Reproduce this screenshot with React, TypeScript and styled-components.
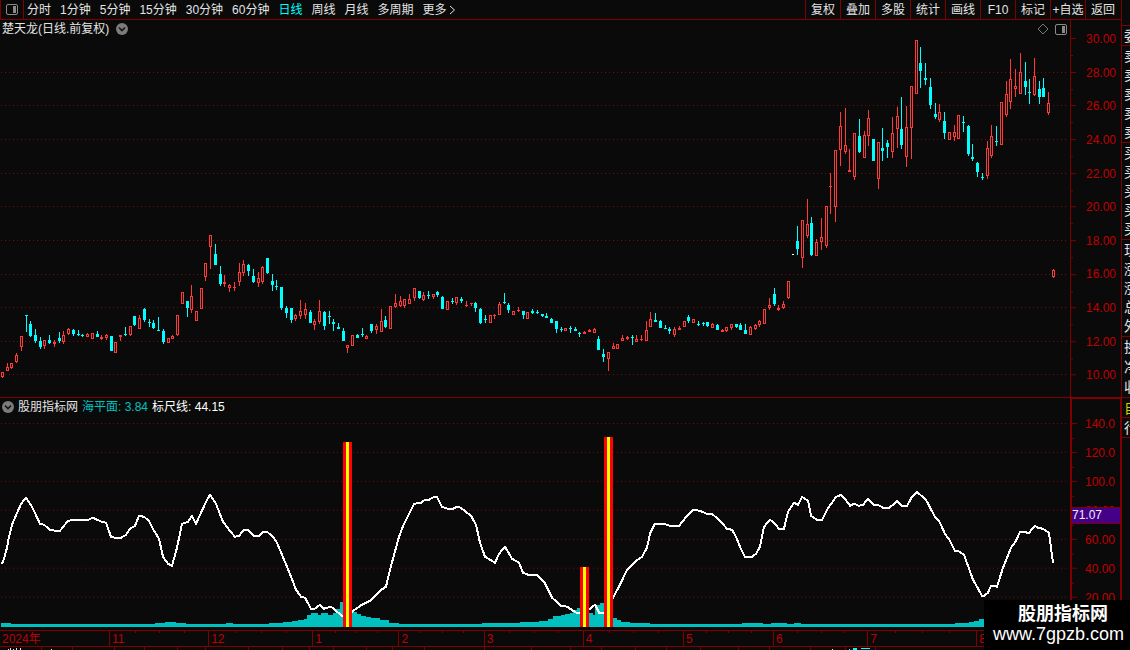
import React from "react";
import styled, { createGlobalStyle, css } from "styled-components";

const color = {
  bg: "#0a0a0a",
  rule: "#800000",
  grid: "#780c0c",
  label: "#c00000",
  text: "#e4e4e4",
  up: "#ff3838",
  down: "#00ffff",
  sea: "#00c0c0",
};

const GlobalStyle = createGlobalStyle`
  * { box-sizing: border-box; }
  body {
    margin: 0;
    background: ${color.bg};
    color: ${color.text};
    font: 12px/16px "Liberation Sans", "Noto Sans CJK SC", sans-serif;
    overflow: hidden;
  }
`;

/* x, high, body top, body bottom, low, direction (r = up, c = down, w = unchanged) */
const CANDLES = `
2 372 372 377 378 r|7 363 367 371 371 r|11 363 363 368 369 r|16 353 355 362 363 r|21 336 336 347 351 r
26 315 315 316 332 c|30 321 324 336 337 c|35 329 335 341 343 c|40 337 341 347 349 c|44 340 340 346 349 r
49 335 340 343 344 c|54 340 342 344 347 r|59 332 338 341 343 c|63 331 335 342 344 r|68 328 329 334 335 r
73 329 330 334 336 c|78 330 334 335 336 c|82 334 335 336 337 c|87 333 334 337 337 r|92 333 333 339 339 r
97 331 334 337 337 c|101 335 337 339 340 r|106 334 335 338 340 r|111 336 336 351 351 c|115 342 342 353 353 r
120 335 335 337 341 r|125 327 334 335 336 c|130 326 326 335 336 r|134 316 316 325 326 c|139 315 318 329 329 r
144 308 309 320 322 c|149 319 322 323 327 c|153 320 323 328 329 c|158 317 330 331 331 c|163 329 331 342 344 c
168 338 338 343 343 r|172 335 336 339 339 r|177 315 315 335 336 r|182 292 292 304 304 r|187 301 301 308 317 c
191 285 296 310 313 r|196 311 311 321 321 r|201 288 288 309 309 r|205 263 263 277 281 r|210 235 235 247 269 r
215 244 254 265 265 c|220 266 274 284 286 c|224 275 282 284 287 r|229 284 285 288 292 r|234 282 287 288 291 r
239 263 272 282 286 r|243 260 264 273 276 r|248 264 265 271 276 c|253 269 276 282 283 c|258 272 278 283 287 r
262 266 267 282 284 r|267 258 258 273 274 c|272 274 281 285 291 c|276 280 286 287 290 c|281 287 287 308 310 c
286 306 308 313 318 c|291 308 308 320 323 c|295 314 315 319 321 r|300 300 311 316 319 r|305 303 309 315 319 r
310 310 312 323 323 c|314 319 321 325 330 r|319 300 311 322 324 r|324 311 312 326 330 c|329 311 316 317 324 c
333 319 322 324 331 c|338 323 327 329 329 c|343 328 331 341 341 c|347 345 345 348 353 r|352 335 335 346 346 r
357 334 335 338 338 c|362 328 334 335 337 c|366 335 336 339 339 r|371 324 324 331 333 c|376 324 326 330 334 r
381 309 321 332 332 r|385 316 320 327 328 c|390 306 306 329 329 r|395 294 303 307 308 r|400 296 301 306 307 r
404 299 299 306 308 r|409 294 299 304 304 r|414 288 288 298 301 r|419 291 291 298 299 c|423 292 295 300 301 r
428 291 295 296 299 c|433 294 294 297 299 r|437 291 292 295 297 c|442 296 297 309 309 c|447 301 301 310 310 r
452 298 301 302 304 c|456 297 297 303 305 r|461 297 299 301 303 c|466 301 305 306 307 r|471 303 303 304 306 r
475 302 303 308 312 c|480 308 309 323 324 c|485 315 319 320 323 c|490 315 315 323 323 r|494 314 315 316 319 r
499 302 304 315 315 r|504 293 302 303 304 c|508 303 305 310 313 c|513 311 311 315 315 r|518 307 310 311 312 r
523 311 311 315 319 c|527 312 312 319 319 r|532 309 311 313 314 c|537 310 312 313 314 c|542 314 314 316 317 c
546 313 316 318 318 c|551 318 319 323 323 c|556 321 321 329 333 c|561 327 329 330 332 c|565 328 328 331 331 r
570 326 328 329 333 c|575 327 329 331 331 c|579 332 333 334 337 c|584 331 332 334 334 r|589 329 330 332 332 r
594 328 329 333 333 r|598 336 339 350 350 c|603 349 354 357 362 c|608 352 352 359 371 r|613 343 346 349 349 r
617 344 344 349 349 r|622 335 338 341 341 r|627 336 337 339 340 r|632 335 337 338 345 c|636 335 339 342 342 r
641 335 339 340 341 r|646 321 330 341 341 r|650 312 319 327 327 r|655 313 320 322 322 c|660 320 321 328 328 c
665 325 328 329 329 c|669 327 329 331 334 c|674 327 329 335 337 r|679 326 328 330 330 r|684 321 321 327 327 r
688 315 317 321 323 c|693 319 319 323 323 r|698 321 324 325 326 c|703 322 323 324 326 c|707 322 322 326 327 c
712 323 324 328 328 r|717 324 325 330 330 c|722 329 330 332 332 r|726 327 327 331 332 r|731 324 324 328 330 r
736 324 324 327 328 c|740 323 325 330 330 c|745 324 330 334 334 c|750 326 327 335 335 r|755 324 325 329 330 r
759 320 321 325 327 r|764 309 309 324 324 r|769 298 305 308 310 r|774 288 294 304 306 c|778 305 308 310 311 r
783 301 304 308 309 r|788 281 281 298 299 r|793 254 254 255 255 w|797 226 241 249 255 c|802 220 220 258 268 r
807 199 224 236 238 r|811 217 223 255 256 c|816 239 242 256 256 r|821 218 237 242 250 r|826 206 206 246 248 r
830 173 186 187 214 r|835 150 150 207 222 r|840 112 126 150 166 r|845 108 145 152 154 r|849 149 170 172 172 r
854 133 133 177 180 r|859 119 136 152 153 c|864 131 135 158 158 r|868 110 118 136 146 r|873 139 139 161 161 c
878 142 142 179 189 r|882 128 148 151 161 c|887 140 143 147 158 c|892 117 133 152 158 r|897 107 116 129 148 r
901 97 129 145 149 c|906 106 127 157 167 r|911 86 86 128 159 r|916 40 40 94 94 r|920 47 63 71 88 c
925 63 78 80 85 c|930 78 87 105 109 c|935 103 114 117 119 c|939 104 112 120 122 r|944 112 121 133 139 c
949 132 132 140 140 r|954 125 132 137 141 r|958 115 115 139 139 r|963 116 122 123 132 c|968 125 126 154 156 c
972 144 157 159 161 c|977 162 163 172 177 c|982 173 177 178 180 c|987 141 148 176 179 r|991 125 136 156 158 r
996 126 141 142 146 c|1001 102 102 145 145 r|1006 81 94 115 117 r|1010 59 79 102 109 r|1015 69 86 89 97 r
1020 53 72 94 94 r|1025 62 81 87 95 c|1029 79 92 93 104 c|1034 58 76 95 96 r|1039 81 89 97 104 c
1043 78 88 97 97 c|1048 92 103 113 115 r|1053 269 270 277 278 r`
  .trim()
  .split(/[|\n]/)
  .map((row) => {
    const [x, high, top, bottom, low, dir] = row.trim().split(" ");
    return { x: +x, high: +high, top: +top, bottom: +bottom, low: +low, dir };
  });

const CURVE =
  "2,564 4,559 7,548 9,537 12,525 21,504 26,498 32,507 40,524 44,525 50,530 55,531 60,531 68,521 74,520 88,520 93,518 97,520 102,522 106,523 111,537 115,538 121,538 126,535 130,529 135,526 139,516 144,517 149,521 154,531 159,539 163,557 168,564 172,566 177,548 182,524 188,522 192,516 196,524 201,513 206,502 210,495 216,504 223,522 229,530 235,537 239,536 244,530 248,530 254,536 259,536 263,532 267,532 273,537 277,543 287,567 291,577 296,590 301,597 305,598 311,609 315,609 320,605 324,609 331,607 337,612 343,617 352,612 362,605 370,601 380,591 386,587 390,570 399,537 404,524 414,504 421,503 425,500 429,500 434,497 437,497 442,507 448,509 453,509 457,507 461,508 467,513 471,516 476,525 480,543 485,557 495,563 499,554 505,547 512,559 519,563 523,573 528,575 537,575 544,582 552,598 561,606 567,607 576,613 581,613 586,612 590,609 595,605 599,613 604,613 613,598 620,585 627,570 635,562 642,557 647,548 650,534 655,524 664,524 670,526 679,526 688,515 693,510 700,511 707,514 712,514 720,521 727,529 732,530 736,537 740,547 745,557 752,557 756,554 760,547 764,527 770,520 774,523 779,529 784,529 788,512 794,503 798,505 802,497 808,501 811,516 817,520 822,520 827,510 836,497 841,495 845,499 850,506 854,504 859,506 863,505 868,499 874,505 878,505 883,508 889,508 893,505 897,501 902,506 907,506 912,497 917,492 926,500 935,517 939,521 945,534 950,541 955,551 958,551 964,555 973,580 982,596 984,596 988,593 991,586 997,587 1003,568 1011,548 1016,541 1020,532 1029,533 1035,526 1038,528 1043,529 1049,533 1053,563";

/* [start x, top y] of each step of the filled area */
const SEA: number[][] = [
  [1, 623], [11, 624], [155, 623], [165, 622], [176, 623], [186, 624], [226, 623], [233, 624], [269, 623],
  [283, 622], [292, 621], [298, 620], [304, 619], [307, 615], [311, 613], [318, 615], [321, 613], [328, 615],
  [333, 613], [336, 609], [340, 602], [352, 612], [357, 614], [361, 616], [366, 617], [371, 618], [380, 620],
  [389, 623], [399, 624], [482, 623], [520, 622], [539, 621], [548, 619], [553, 616], [561, 615], [565, 614],
  [570, 613], [573, 610], [577, 608], [589, 613], [593, 615], [595, 605], [600, 603], [613, 618], [617, 620],
  [621, 622], [630, 623], [650, 624], [742, 623], [763, 624], [771, 623], [787, 624], [794, 623], [801, 624],
  [955, 623], [969, 622], [974, 621], [979, 619], [1000, 618],
];

const SIGNALS = [
  { x: 343, top: 442 },
  { x: 580, top: 567 },
  { x: 604, top: 437 },
];

const PRICES = ["30.00", "28.00", "26.00", "24.00", "22.00", "20.00", "18.00", "16.00", "14.00", "12.00", "10.00"];
const PRICE_Y = [38, 72, 105, 139, 173, 206, 240, 274, 307, 341, 374];
const LEVELS = ["140.0", "120.0", "100.0", "80.00", "60.00", "40.00", "20.00"];
const LEVEL_Y = [423, 452, 481, 510, 539, 568, 597];
const PERIODS = ["分时", "1分钟", "5分钟", "15分钟", "30分钟", "60分钟", "日线", "周线", "月线", "多周期", "更多"];
const ACTIONS = ["复权", "叠加", "多股", "统计", "画线", "F10", "标记", "+自选", "返回"];
const MONTHS = [
  { label: "2024年", span: 110 },
  { label: "11", span: 99 },
  { label: "12", span: 104 },
  { label: "1", span: 86 },
  { label: "2", span: 85 },
  { label: "3", span: 99 },
  { label: "4", span: 100 },
  { label: "5", span: 90 },
  { label: "6", span: 94 },
  { label: "7", span: 109 },
  { label: "8", span: 145 },
];
const TABS = [42, 31, 42, 29, 33, 28, 43, 34, 26, 24, 32, 26, 32, 60, 47, 39, 31, 34, 30, 34, 38, 31, 41, 35, 29, 250];

const Screen = styled.div`
  position: relative;
  display: flex;
  height: 100vh;
  overflow: hidden;
`;

const Workspace = styled.main`
  flex: 1;
  min-width: 0;
  display: flex;
  flex-direction: column;
`;

const Toolbar = styled.header`
  display: flex;
  flex: none;
  height: 20px;
  border-bottom: 1px solid ${color.rule};
`;

const PanelToggle = styled.button`
  width: 24px;
  padding: 0;
  border: solid ${color.rule};
  border-width: 0 1px;
  background: none;
  display: grid;
  place-items: center;
`;

const PeriodNav = styled.nav`
  flex: 1;
  display: flex;
  gap: 9px;
  padding-left: 3px;
`;

const PeriodButton = styled.button<{ $active?: boolean }>`
  display: flex;
  align-items: center;
  gap: 2px;
  padding: 0;
  border: 0;
  background: none;
  font: inherit;
  white-space: nowrap;
  color: ${(p) => (p.$active ? color.down : color.text)};
`;

const ActionGroup = styled.div`
  display: grid;
  grid-template-columns: repeat(9, 35px);
  padding-right: 1px;
`;

const ActionButton = styled.button`
  padding: 0;
  border: 0;
  border-left: 1px solid ${color.rule};
  background: none;
  color: ${color.text};
  font: inherit;
  white-space: nowrap;
`;

const Panel = styled.section<{ $share: number }>`
  display: flex;
  flex: ${(p) => p.$share} 1 0;
  min-height: 0;
`;

const PricePanel = styled(Panel)`
  border-bottom: 1px solid ${color.rule};
`;

const Plot = styled.div`
  position: relative;
  flex: 1;
  min-width: 0;
`;

const Drawing = styled.svg`
  display: block;
  width: 100%;
  height: 100%;
`;

const PlotHeader = styled.div<{ $gap: number }>`
  position: absolute;
  inset: 0 0 auto 0;
  display: flex;
  align-items: center;
  height: 18px;
  gap: ${(p) => p.$gap}px;
  padding-left: 2px;
`;

const HeaderTools = styled.div`
  display: flex;
  align-items: center;
  gap: 6px;
  margin-left: auto;
  padding-right: 3px;
`;

const Reading = styled.span<{ $tone: string }>`
  color: ${(p) => p.$tone};
`;

const IconButton = styled.button`
  display: flex;
  padding: 0;
  border: 0;
  background: none;
`;

const Axis = styled.div<{ $framed?: boolean }>`
  position: relative;
  display: flex;
  flex: none;
  width: 51px;
  border-left: 1px solid ${color.rule};
  ${(p) =>
    p.$framed &&
    css`
      border: solid ${color.rule};
      border-width: 1px 1px 0 2px;
    `}
`;

const AxisTicks = styled.svg`
  flex: none;
  width: 5px;
  height: 100%;
`;

const AxisLabels = styled.ol<{ $top: number; $bottom: number }>`
  flex: 1;
  display: flex;
  flex-direction: column;
  justify-content: space-between;
  margin: 0;
  padding: ${(p) => p.$top}px 5px ${(p) => p.$bottom}px 0;
  list-style: none;
  text-align: right;
  color: ${color.label};
`;

const CurrentLevel = styled.output`
  position: absolute;
  top: 108px;
  left: 0;
  right: 0;
  height: 17px;
  border: solid ${color.rule};
  border-width: 1px 0;
  background: #440088;
  color: #f0f0f0;
  line-height: 15px;
`;

const TimeAxis = styled.ol`
  display: flex;
  flex: none;
  height: 17px;
  margin: 0;
  padding: 0;
  list-style: none;
  border: solid ${color.rule};
  border-width: 1px 0;
  color: ${color.label};
`;

const Month = styled.li<{ $span: number }>`
  flex: ${(p) => p.$span} 1 0;
  min-width: 0;
  & + & {
    border-left: 1px solid ${color.rule};
  }
`;

const Weeks = styled.div<{ $empty: boolean }>`
  display: grid;
  grid-template-columns: repeat(4, 1fr);
  height: 2px;
  visibility: ${(p) => (p.$empty ? "hidden" : "visible")};
`;

const Week = styled.i`
  & + & {
    border-left: 1px solid ${color.rule};
  }
`;

const MonthName = styled.span`
  display: block;
  padding-left: 2px;
  line-height: 13px;
`;

const TabStrip = styled.footer`
  display: flex;
  flex: none;
  height: 3px;
`;

const Tab = styled.div<{ $span: number }>`
  flex: ${(p) => p.$span} 1 0;
  min-width: 0;
  border-right: 1px solid ${color.rule};
`;

const TabMark = styled.svg`
  display: block;
  width: 28px;
  height: 3px;
`;

const Quotes = styled.aside`
  flex: none;
  width: 9px;
  overflow: hidden;
  border-left: 1px solid ${color.rule};
  font-size: 14px;
`;

const QuoteGap = styled.div`
  height: 26px;
  border-bottom: 1px solid ${color.rule};
`;

const QuoteGroup = styled.ul<{ $height: number; $tone?: string }>`
  display: flex;
  flex-direction: column;
  justify-content: space-around;
  width: 24px;
  height: ${(p) => p.$height}px;
  margin: 0;
  padding: 0 0 0 2px;
  list-style: none;
  border-bottom: 1px solid ${color.rule};
  color: ${(p) => p.$tone ?? color.text};
`;

const Watermark = styled.div`
  position: absolute;
  right: 0;
  bottom: 0;
  width: 146px;
  height: 50px;
  padding: 4px 6px 0 0;
  background: #000;
  color: #fff;
  font-size: 18px;
  line-height: 20px;
  text-align: right;
`;

const SiteName = styled.strong`
  display: block;
  padding-right: 16px;
`;

const LayoutIcon = () => (
  <svg width="12" height="11" viewBox="0 0 12 11">
    <rect x="0.5" y="0.5" width="11" height="10" rx="1.5" fill="none" stroke="#8a8a8a" />
    <rect x="7" y="2" width="3" height="7" fill="#8a8a8a" />
  </svg>
);

const DropIcon = () => (
  <svg width="12" height="12" viewBox="0 0 12 12">
    <circle cx="6" cy="6" r="6" fill="#7c7c7c" />
    <path d="M3 4.5 6 7.5 9 4.5" fill="none" stroke="#141414" strokeWidth="1.6" />
  </svg>
);

const Candle = ({ x, high, top, bottom, low, dir }: (typeof CANDLES)[number]) => {
  const fill = dir === "r" ? color.up : dir === "c" ? color.down : "#fff";
  return (
    <g fill={fill}>
      <rect x={x} y={high} width="1" height={low - high} />
      <rect x={x - 1} y={top} width={dir === "w" ? 2 : 3} height={bottom - top} />
      {dir === "r" && bottom - top > 2 && (
        <rect x={x} y={top + 1} width="1" height={bottom - top - 2} fill={color.bg} />
      )}
    </g>
  );
};

const GridLines = ({ rows }: { rows: number[] }) => (
  <g stroke={color.grid} strokeDasharray="1 3">
    {rows.map((y) => (
      <line key={y} x1="1" x2="1067" y1={y + 0.5} y2={y + 0.5} />
    ))}
  </g>
);

const Ticks = ({ rows, top, height }: { rows: number[]; top: number; height: number }) => (
  <AxisTicks viewBox={`0 ${top} 5 ${height}`} preserveAspectRatio="none" fill={color.rule} aria-hidden>
    {rows.map((y, i) => (
      <React.Fragment key={y}>
        <rect x="0" y={y} width="5" height="1" />
        {i < rows.length - 1 && <rect x="0" y={Math.round((y + rows[i + 1]) / 2)} width="2" height="1" />}
      </React.Fragment>
    ))}
  </AxisTicks>
);

const seaPath =
  "M1,627" + SEA.map(([x, y], i) => `H${x}V${y}` + (i === SEA.length - 1 ? "H1070V627Z" : "")).join("");

/* The sliver of each tab's caption that shows above the window's lower edge */
const TAB_MARKS: Record<number, { d: string; fill: string }> = {
  0: { d: "M8 2h1v1H8zM10 1h1v2h-1zM13 2h1v1h-1zM16 1h1v2h-1zM20 1h1v2h-1z", fill: color.text },
  1: { d: "M9 2h1v1H9z", fill: color.text },
  23: { d: "M21 2h1v1h-1z", fill: color.text },
  24: { d: "M3 2h1v1H3zM7 1h4v2H7zM15 1h9v1h-9z", fill: color.down },
};

export default function App() {
  return (
    <>
      <GlobalStyle />
      <Screen>
        <Workspace>
          <Toolbar>
            <PanelToggle aria-label="侧栏">
              <LayoutIcon />
            </PanelToggle>
            <PeriodNav>
              {PERIODS.map((name) => (
                <PeriodButton key={name} $active={name === "日线"}>
                  {name}
                  {name === "更多" && (
                    <svg width="7" height="10" viewBox="0 0 7 10">
                      <path d="M1 1 5.5 5 1 9" fill="none" stroke={color.text} />
                    </svg>
                  )}
                </PeriodButton>
              ))}
            </PeriodNav>
            <ActionGroup>
              {ACTIONS.map((name) => (
                <ActionButton key={name}>{name}</ActionButton>
              ))}
            </ActionGroup>
          </Toolbar>

          <PricePanel $share={378}>
            <Plot>
              <Drawing viewBox="0 20 1070 377" preserveAspectRatio="none" shapeRendering="crispEdges">
                <GridLines rows={PRICE_Y.slice(1)} />
                {CANDLES.map((c) => (
                  <Candle key={c.x} {...c} />
                ))}
              </Drawing>
              <PlotHeader $gap={7}>
                <span>楚天龙(日线.前复权)</span>
                <IconButton aria-label="切换">
                  <DropIcon />
                </IconButton>
                <HeaderTools>
                  <IconButton aria-label="标记">
                    <svg width="12" height="12" viewBox="0 0 12 12">
                      <path d="M6 1 11 6 6 11 1 6Z" fill="none" stroke="#777" />
                    </svg>
                  </IconButton>
                  <IconButton aria-label="布局">
                    <LayoutIcon />
                  </IconButton>
                </HeaderTools>
              </PlotHeader>
            </Plot>
            <Axis>
              <Ticks rows={PRICE_Y} top={20} height={377} />
              <AxisLabels $top={11} $bottom={14}>
                {PRICES.map((p) => (
                  <li key={p}>{p}</li>
                ))}
              </AxisLabels>
            </Axis>
          </PricePanel>

          <Panel $share={232}>
            <Plot>
              <Drawing
                viewBox="0 398 1070 232"
                preserveAspectRatio="none"
                shapeRendering="crispEdges"
              >
                <GridLines rows={LEVEL_Y} />
                <path d={seaPath} fill={color.sea} />
                <polyline points={CURVE} fill="none" stroke="#fff" strokeWidth="2" strokeLinejoin="round" />
                {SIGNALS.map(({ x, top }) => (
                  <React.Fragment key={x}>
                    <rect x={x} y={top} width="9" height={627 - top} fill="#f00" />
                    <rect x={x + 3} y={top} width="3" height={627 - top} fill="#ff0" />
                  </React.Fragment>
                ))}
              </Drawing>
              <PlotHeader $gap={4}>
                <IconButton aria-label="指标">
                  <DropIcon />
                </IconButton>
                <Reading $tone={color.text}>股朋指标网</Reading>
                <Reading $tone={color.sea}>海平面: 3.84</Reading>
                <Reading $tone="#fff">标尺线: 44.15</Reading>
              </PlotHeader>
            </Plot>
            <Axis $framed>
              <Ticks rows={LEVEL_Y} top={399} height={231} />
              <AxisLabels $top={17} $bottom={24}>
                {LEVELS.map((p) => (
                  <li key={p}>{p}</li>
                ))}
              </AxisLabels>
              <CurrentLevel>71.07</CurrentLevel>
            </Axis>
          </Panel>

          <TimeAxis>
            {MONTHS.map(({ label, span }, i) => (
              <Month key={label} $span={span}>
                <Weeks $empty={i === 0}>
                  <Week />
                  <Week />
                  <Week />
                  <Week />
                </Weeks>
                <MonthName>{label}</MonthName>
              </Month>
            ))}
          </TimeAxis>
          <TabStrip>
            {TABS.map((span, i) => (
              <Tab key={i} $span={span}>
                {TAB_MARKS[i] && (
                  <TabMark shapeRendering="crispEdges">
                    <path {...TAB_MARKS[i]} />
                  </TabMark>
                )}
              </Tab>
            ))}
          </TabStrip>
        </Workspace>

        <Quotes>
          <QuoteGap />
          <QuoteGroup $height={20}>
            <li>委</li>
          </QuoteGroup>
          <QuoteGroup $height={97}>
            {[5, 4, 3, 2, 1].map((n) => (
              <li key={n}>卖</li>
            ))}
          </QuoteGroup>
          <QuoteGroup $height={97}>
            {[1, 2, 3, 4, 5].map((n) => (
              <li key={n}>买</li>
            ))}
          </QuoteGroup>
          <QuoteGroup $height={97}>
            <li>现</li>
            <li>涨</li>
            <li>涨</li>
            <li>总</li>
            <li>外</li>
          </QuoteGroup>
          <QuoteGroup $height={61}>
            <li>换</li>
            <li>净</li>
            <li>收</li>
          </QuoteGroup>
          <QuoteGroup $height={20} $tone="#d0d000">
            <li>自</li>
          </QuoteGroup>
          <QuoteGroup $height={20}>
            <li>行</li>
          </QuoteGroup>
        </Quotes>

        <Watermark>
          <SiteName>股朋指标网</SiteName>
          www.7gpzb.com
        </Watermark>
      </Screen>
    </>
  );
}
